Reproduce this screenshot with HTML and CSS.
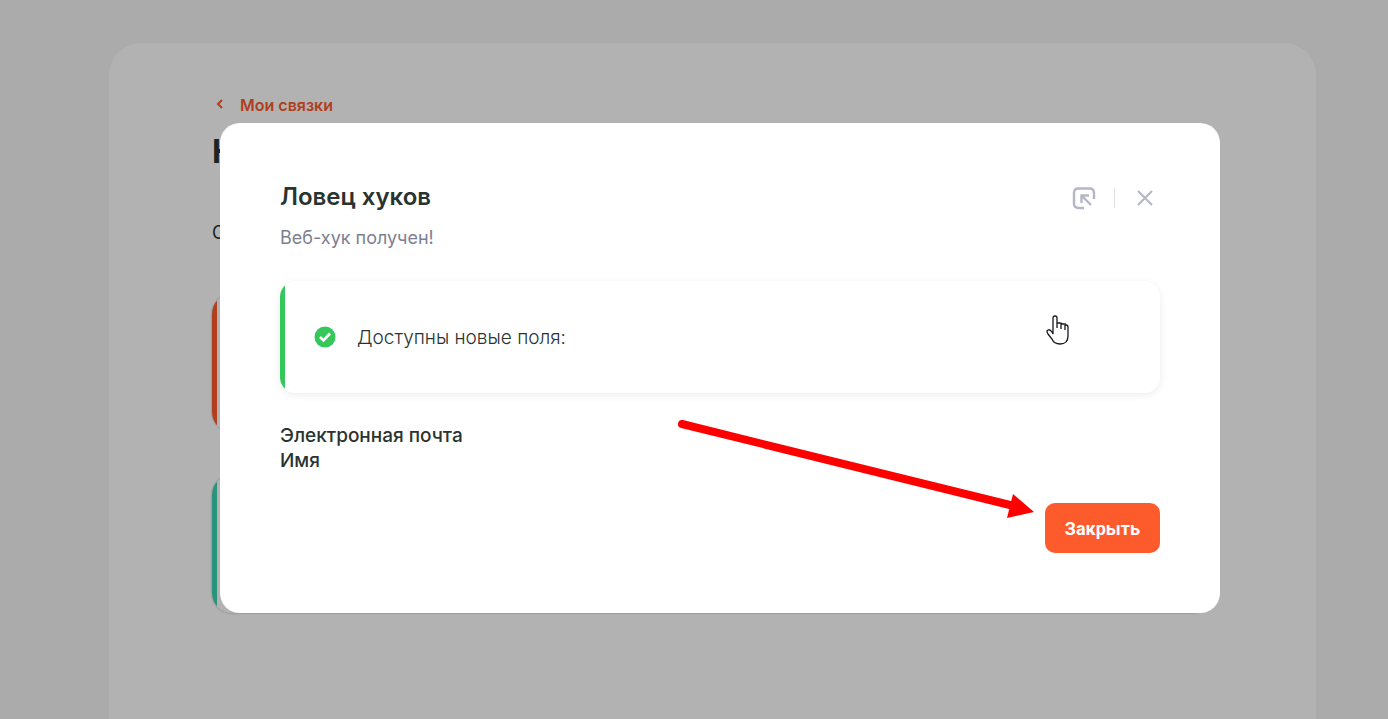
FILE: index.html
```html
<!DOCTYPE html>
<html lang="ru">
<head>
  <meta charset="UTF-8" />
  <meta name="viewport" content="width=device-width, initial-scale=1.0" />
  <title>Ловец хуков</title>
  <link rel="stylesheet" href="styles.css">
</head>
<body>
  <main class="page">
    <a class="back" href="#">
      <svg width="8" height="12" viewBox="0 0 8 12" fill="none" stroke="currentColor" stroke-width="2"><path d="M6 1 2 5l4 4"/></svg>
      Мои связки
    </a>
    <h1 class="page-title">К</h1>
    <p class="page-text">С</p>
    <div class="card card-orange"></div>
    <div class="card card-green"></div>
  </main>

  <div class="overlay">
    <section class="modal" role="dialog" aria-labelledby="modalTitle">
      <header class="modal-header">
        <div>
          <h2 class="modal-title" id="modalTitle">Ловец хуков</h2>
          <p class="modal-subtitle">Веб-хук получен!</p>
        </div>
        <div class="modal-tools">
          <button class="tool" type="button" aria-label="Свернуть">
            <svg width="24" height="24" viewBox="0 0 24 24" fill="none" stroke="currentColor" stroke-width="2.400">
              <path d="M22 13V7q0-4.500-4.500-4.500h-11Q2 2.500 2 7v10.500Q2 22 6.500 22H12"/>
              <path d="M9.500 17V9.500H17M9.500 9.500l9.500 9.500"/>
            </svg>
          </button>
          <span class="divider"></span>
          <button class="tool" type="button" aria-label="Закрыть окно">
            <svg width="24" height="24" viewBox="0 0 24 24" fill="none" stroke="currentColor" stroke-width="2">
              <path d="m5 5 14 14M19 5 5 19"/>
            </svg>
          </button>
        </div>
      </header>

      <div class="notice">
        <svg width="22" height="22" viewBox="0 0 22 22" fill="none">
          <circle cx="11" cy="11" r="10.5" fill="#34c759"/>
          <path d="m6 11 3.500 3.500L16 7.500" stroke="#fff" stroke-width="2.600"/>
        </svg>
        <span>Доступны новые поля:</span>
      </div>

      <ul class="fields">
        <li>Электронная почта</li>
        <li>Имя</li>
      </ul>

      <footer class="modal-footer">
        <button class="btn" type="button">Закрыть</button>
      </footer>

      <svg class="arrow" width="356" height="102" viewBox="0 0 356 102">
        <path d="M6 5 334 86" stroke="#f00" stroke-width="8" stroke-linecap="round"/>
        <path d="m337 75 21 18-27 6z" fill="#f00"/>
      </svg>
      <svg class="pointer" width="24" height="32" viewBox="0 0 24 32">
        <path d="M7 19V3q0-2 2-2t2 2v5h3q2 0 2 1h3q1 0 1 1 2 0 2 2v9q0 8-8 8-6 0-8-5l-4-5q-2-3 0-4 2-1 4 2zM11 8v5M15 9v5M19 10v5" fill="#fff" stroke="#15151f" stroke-width="1.300"/>
      </svg>
    </section>
  </div>
</body>
</html>
```

FILE: styles.css
```css
* {
  box-sizing: border-box;
}

body {
  margin: 0;
  min-height: 100vh;
  display: flex;
  background: #f5f5f5;
  color: #293330;
  font-family: Inter, "Liberation Sans", sans-serif;
  font-size: 18px;
  line-height: 25px;
}

h1,
h2,
p,
ul {
  margin: 0;
  padding: 0;
}

.page {
  flex: 1;
  margin: 43px 72px 0 109px;
  padding: 50px 103px 100px;
  border-radius: 32px 32px 0 0;
  background: #fff;
}

.back {
  display: flex;
  align-items: center;
  gap: 16px;
  padding-left: 4px;
  color: #fe5b2c;
  font-size: 16px;
  font-weight: 600;
  line-height: 24px;
  text-decoration: none;
}

.page-title {
  margin-top: 15px;
  font-size: 32px;
  font-weight: 700;
  line-height: 40px;
}

.page-text {
  margin-top: 48px;
}

.card {
  height: 138px;
  margin-top: 49px;
  border-radius: 20px;
  box-shadow: 0 0 2px rgba(0, 0, 0, 0.4);
}

.card-orange {
  background: linear-gradient(to right, #fe5b2c 5px, #fff 5px);
}

.card-green {
  margin-top: 43px;
  background: linear-gradient(to right, #3cd3b0 5px, #fff 5px);
}

.overlay {
  position: fixed;
  inset: 0;
  display: flex;
  align-items: flex-start;
  justify-content: center;
  padding: 123px 0 0 52px;
  background: rgba(0, 0, 0, 0.3);
}

.modal {
  position: relative;
  width: 100%;
  max-width: 1000px;
  padding: 60px;
  border-radius: 20px;
  background: #fff;
}

.modal-header {
  display: flex;
  justify-content: space-between;
  align-items: flex-start;
}

.modal-title {
  font-size: 24px;
  font-weight: 600;
  line-height: 28px;
}

.modal-subtitle {
  margin-top: 14px;
  color: #7d8092;
}

.modal-tools {
  display: flex;
  align-items: center;
  gap: 18px;
  padding: 3px 3px 0 0;
}

.tool {
  display: flex;
  padding: 0;
  border: none;
  background: none;
  color: #b4b6c6;
  cursor: pointer;
}

.divider {
  width: 1px;
  height: 20px;
  background: #dddee5;
}

.notice {
  display: flex;
  align-items: center;
  gap: 21px;
  height: 112px;
  margin-top: 31px;
  padding-left: 34px;
  border-radius: 16px;
  background: linear-gradient(to right, #34c759 5px, #fff 5px);
  box-shadow: 0 2px 8px rgba(0, 0, 0, 0.08);
  font-size: 19px;
  font-weight: 300;
}

.fields {
  margin-top: 30px;
  list-style: none;
  font-size: 19px;
  font-weight: 500;
}

.modal-footer {
  display: flex;
  justify-content: flex-end;
  margin-top: 30px;
}

.btn {
  height: 50px;
  padding: 0 20px;
  border: none;
  border-radius: 10px;
  background: #fe5b2c;
  color: #fff;
  font-family: Roboto, sans-serif;
  font-size: 18px;
  font-weight: 700;
  cursor: pointer;
}

.arrow {
  position: absolute;
  top: 296px;
  right: 188px;
  overflow: visible;
}

.pointer {
  position: absolute;
  top: 192px;
  right: 150px;
}
```
